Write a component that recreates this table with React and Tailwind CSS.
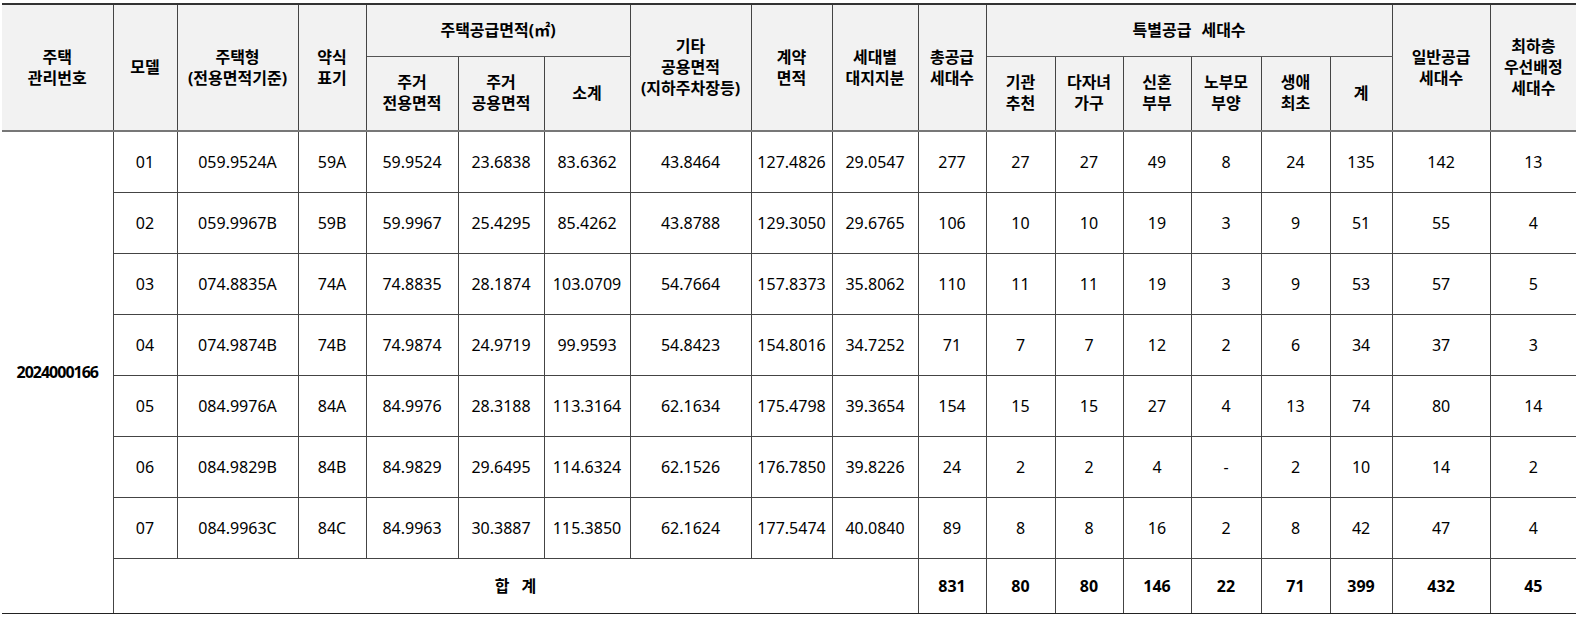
import React from "react";

const colCls = [
  "w-[111px]", "w-[64px]", "w-[121px]", "w-[68px]", "w-[92px]", "w-[86px]", "w-[86px]", "w-[121px]", "w-[81px]", "w-[86px]",
  "w-[68px]", "w-[69px]", "w-[68px]", "w-[68px]", "w-[70px]", "w-[69px]", "w-[62px]", "w-[98px]", "w-[86px]",
];

const rows = [
  ["01", "059.9524A", "59A", "59.9524", "23.6838", "83.6362", "43.8464", "127.4826", "29.0547", "277", "27", "27", "49", "8", "24", "135", "142", "13"],
  ["02", "059.9967B", "59B", "59.9967", "25.4295", "85.4262", "43.8788", "129.3050", "29.6765", "106", "10", "10", "19", "3", "9", "51", "55", "4"],
  ["03", "074.8835A", "74A", "74.8835", "28.1874", "103.0709", "54.7664", "157.8373", "35.8062", "110", "11", "11", "19", "3", "9", "53", "57", "5"],
  ["04", "074.9874B", "74B", "74.9874", "24.9719", "99.9593", "54.8423", "154.8016", "34.7252", "71", "7", "7", "12", "2", "6", "34", "37", "3"],
  ["05", "084.9976A", "84A", "84.9976", "28.3188", "113.3164", "62.1634", "175.4798", "39.3654", "154", "15", "15", "27", "4", "13", "74", "80", "14"],
  ["06", "084.9829B", "84B", "84.9829", "29.6495", "114.6324", "62.1526", "176.7850", "39.8226", "24", "2", "2", "4", "-", "2", "10", "14", "2"],
  ["07", "084.9963C", "84C", "84.9963", "30.3887", "115.3850", "62.1624", "177.5474", "40.0840", "89", "8", "8", "16", "2", "8", "42", "47", "4"],
];

const totals = ["831", "80", "80", "146", "22", "71", "399", "432", "45"];

const th = "border border-[#444] bg-[#f2f2f2] font-bold text-[16px] leading-[21px] text-center align-middle p-0";
const td = "border border-[#444] text-[16px] text-center align-middle p-0 whitespace-nowrap";

export default function App() {
  return (
    <div className="bg-white w-[1583px] h-[619px] font-['Noto_Sans','Noto_Sans_CJK_KR',sans-serif] text-black">
      <table className="ml-[2px] mt-[3px] w-[1574px] table-fixed border-collapse">
        <colgroup>
          {colCls.map((c, i) => (
            <col key={i} className={c} />
          ))}
        </colgroup>
        <thead>
          <tr className="h-[52px]">
            <th rowSpan={2} className={`${th} border-l-0 border-t-2 border-t-[#333] border-b-2 border-b-[#777]`}>
              주택<br />관리번호
            </th>
            <th rowSpan={2} className={`${th} border-t-2 border-t-[#333] border-b-2 border-b-[#777]`}>모델</th>
            <th rowSpan={2} className={`${th} border-t-2 border-t-[#333] border-b-2 border-b-[#777]`}>
              주택형<br />(전용면적기준)
            </th>
            <th rowSpan={2} className={`${th} border-t-2 border-t-[#333] border-b-2 border-b-[#777]`}>
              약식<br />표기
            </th>
            <th colSpan={3} className={`${th} border-t-2 border-t-[#333] border-b-[#555]`}>주택공급면적(㎡)</th>
            <th rowSpan={2} className={`${th} border-t-2 border-t-[#333] border-b-2 border-b-[#777]`}>
              기타<br />공용면적<br />(지하주차장등)
            </th>
            <th rowSpan={2} className={`${th} border-t-2 border-t-[#333] border-b-2 border-b-[#777]`}>
              계약<br />면적
            </th>
            <th rowSpan={2} className={`${th} border-t-2 border-t-[#333] border-b-2 border-b-[#777]`}>
              세대별<br />대지지분
            </th>
            <th rowSpan={2} className={`${th} border-t-2 border-t-[#333] border-b-2 border-b-[#777]`}>
              총공급<br />세대수
            </th>
            <th colSpan={6} className={`${th} border-t-2 border-t-[#333] border-b-[#555]`}>
              특별공급<span className="ml-[10px]">세대수</span>
            </th>
            <th rowSpan={2} className={`${th} border-t-2 border-t-[#333] border-b-2 border-b-[#777]`}>
              일반공급<br />세대수
            </th>
            <th rowSpan={2} className={`${th} border-r-0 border-t-2 border-t-[#333] border-b-2 border-b-[#777]`}>
              최하층<br />우선배정<br />세대수
            </th>
          </tr>
          <tr className="h-[75px]">
            <th className={`${th} border-b-2 border-b-[#777]`}>주거<br />전용면적</th>
            <th className={`${th} border-b-2 border-b-[#777]`}>주거<br />공용면적</th>
            <th className={`${th} border-b-2 border-b-[#777]`}>소계</th>
            <th className={`${th} border-b-2 border-b-[#777]`}>기관<br />추천</th>
            <th className={`${th} border-b-2 border-b-[#777]`}>다자녀<br />가구</th>
            <th className={`${th} border-b-2 border-b-[#777]`}>신혼<br />부부</th>
            <th className={`${th} border-b-2 border-b-[#777]`}>노부모<br />부양</th>
            <th className={`${th} border-b-2 border-b-[#777]`}>생애<br />최초</th>
            <th className={`${th} border-b-2 border-b-[#777]`}>계</th>
          </tr>
        </thead>
        <tbody>
          {rows.map((r, ri) => (
            <tr key={ri} className="h-[61px]">
              {ri === 0 && (
                <td rowSpan={8} className={`${td} border-l-0 border-b-[#222] font-bold text-[14px] tracking-[-1px]`}>
                  2024000166
                </td>
              )}
              {r.map((v, ci) => (
                <td key={ci} className={`${td} ${ci === r.length - 1 ? "border-r-0" : ""}`}>
                  {v}
                </td>
              ))}
            </tr>
          ))}
          <tr className="h-[55px]">
            <td colSpan={9} className={`${td} font-bold border-b-[#222]`}>
              합<span className="ml-[12px]">계</span>
            </td>
            {totals.map((v, i) => (
              <td key={i} className={`${td} font-bold border-b-[#222] ${i === totals.length - 1 ? "border-r-0" : ""}`}>
                {v}
              </td>
            ))}
          </tr>
        </tbody>
      </table>
    </div>
  );
}
